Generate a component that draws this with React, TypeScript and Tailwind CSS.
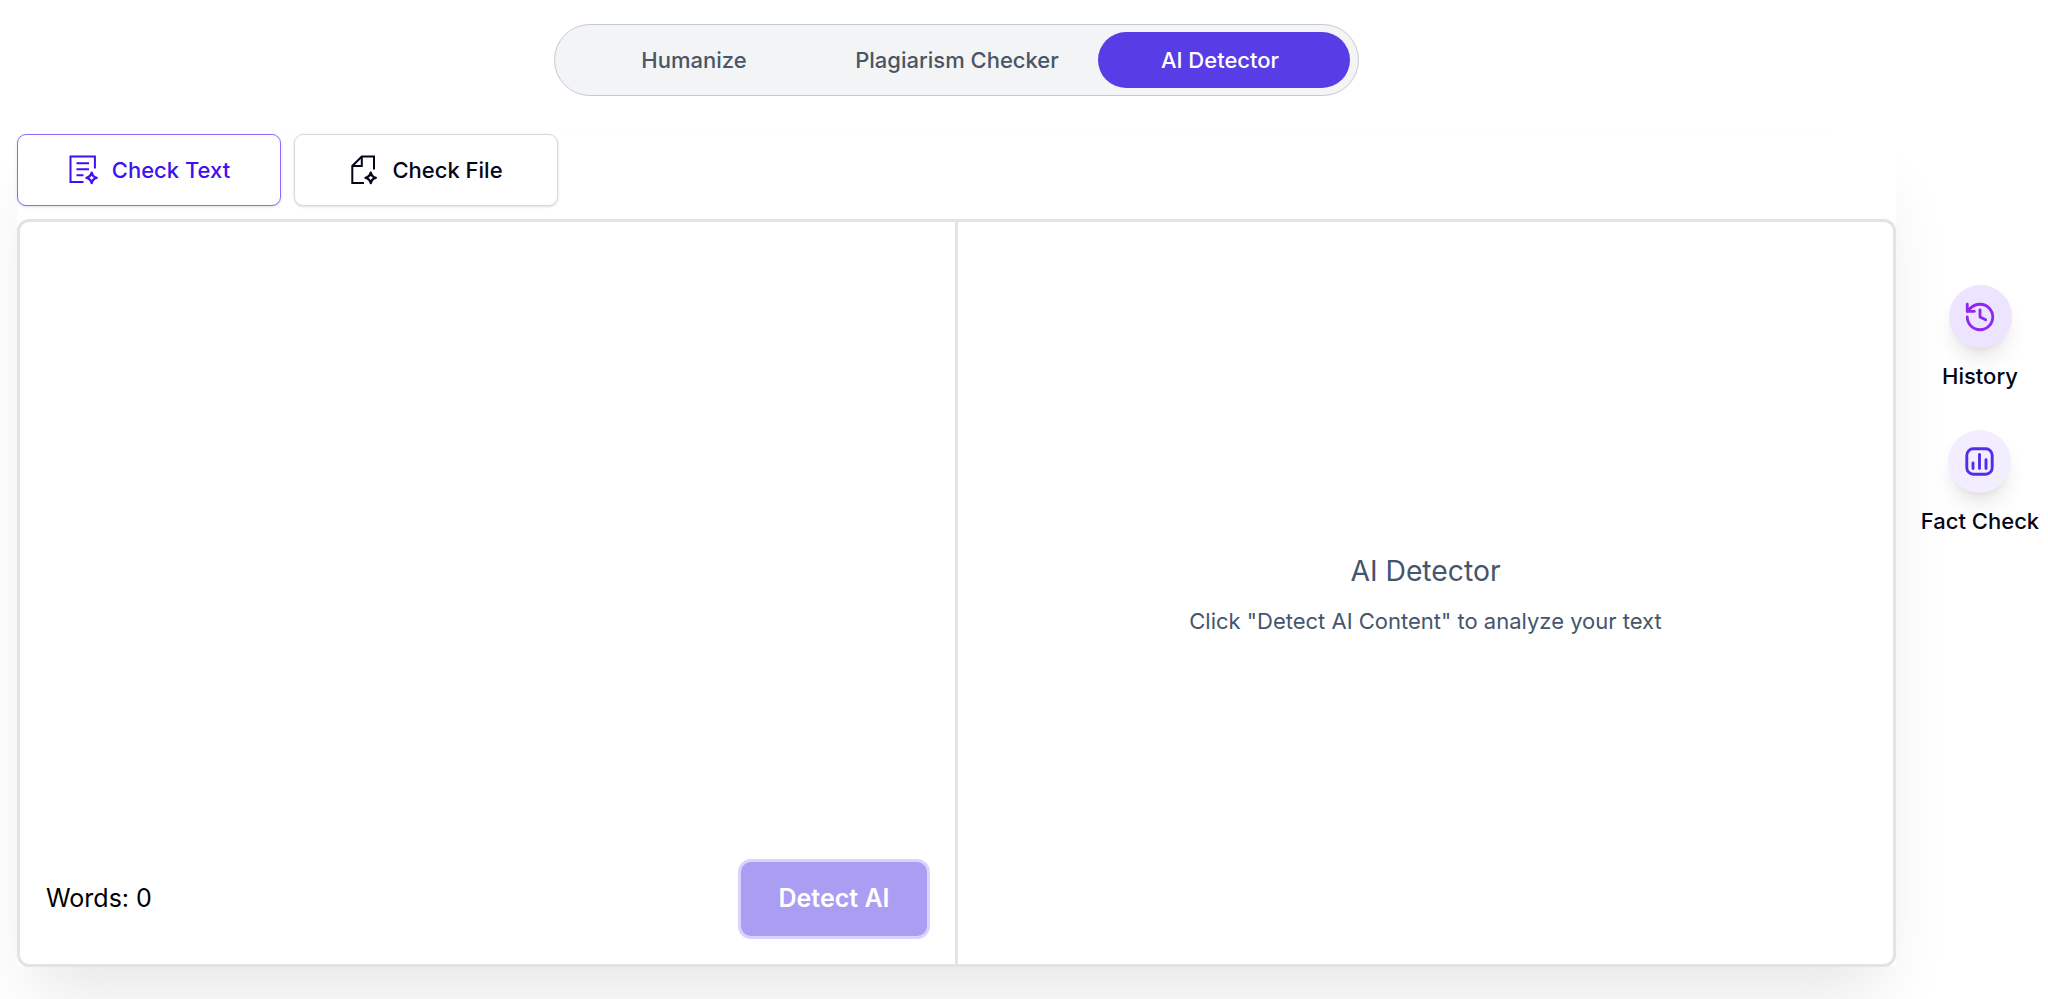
import type { ReactNode } from "react";
import { History } from "lucide-react";

const tabs = [
  { label: "Humanize", active: false, className: "ml-[3px] w-[252px]" },
  { label: "Plagiarism Checker", active: false, className: "ml-[11px] w-[252px]" },
  { label: "AI Detector", active: true, className: "ml-[15px] w-[252px] pr-[8px]" },
];

function CheckTextIcon() {
  return (
    <svg width="30" height="30" viewBox="0 0 30 30" fill="none" stroke="currentColor" strokeWidth="2">
      <path d="M14.5 27H1.5V1.5h24.4V13.5" />
      <path d="M7.5 8.3h12.5M7.5 14.3h12.5M7.5 20.3h7" />
      <path
        d="M22.7 17.6c.6 3.2 1.7 4.3 5 5.2-3.3.8-4.4 1.9-5 5.2-.7-3.3-1.8-4.4-5.2-5.2 3.4-.9 4.5-2 5.2-5.2Z"
        strokeWidth="2.4"
        strokeLinejoin="round"
      />
    </svg>
  );
}

function CheckFileIcon() {
  return (
    <svg width="30" height="30" viewBox="0 0 30 30" fill="none" stroke="currentColor" strokeWidth="2">
      <path d="M15 28H3.3V11L12.8 1.5H25V14.5" />
      <path d="M3.3 11h9.5V1.5" />
      <path
        d="M21.8 17.6c.6 3.2 1.7 4.3 5 5.2-3.3.8-4.4 1.9-5 5.2-.7-3.3-1.8-4.4-5.2-5.2 3.4-.9 4.5-2 5.2-5.2Z"
        strokeWidth="2.4"
        strokeLinejoin="round"
      />
    </svg>
  );
}

function FactCheckIcon() {
  return (
    <svg width="29" height="29" viewBox="0 0 29 29" fill="none" stroke="currentColor" strokeWidth="2.9" strokeLinecap="round">
      <rect x="1.8" y="1.8" width="25.4" height="25.4" rx="6.5" />
      <path d="M8 16v5.5M14.5 7.5v14M21 12.8v8.7" />
    </svg>
  );
}

function SideAction({ label, tone, children }: { label: string; tone: string; children: ReactNode }) {
  return (
    <button className="flex flex-col items-center">
      <span
        className={`flex size-[63px] items-center justify-center rounded-full shadow-[0_14px_21px_-4px_rgba(0,0,0,0.1),0_6px_8px_-6px_rgba(0,0,0,0.1)] ${tone}`}
      >
        {children}
      </span>
      <span className="mt-[11px] text-[22px] leading-[34px] font-medium whitespace-nowrap text-[#020618]">{label}</span>
    </button>
  );
}

export default function App() {
  return (
    <div className="h-[999px] overflow-hidden bg-white font-[Inter,sans-serif]">
      <nav className="mt-6 ml-[554px] flex h-[72px] w-[805px] items-center rounded-full border border-[#c5c9d2] bg-[#f3f4f6] pl-[10px]">
        {tabs.map((tab) => (
          <button
            key={tab.label}
            className={`h-[56px] shrink-0 rounded-full text-[22px] font-medium whitespace-nowrap ${tab.className} ${
              tab.active ? "bg-[#583ce6] text-white" : "text-[#4a5565]"
            }`}
          >
            {tab.label}
          </button>
        ))}
      </nav>

      <div className="mt-[38px] flex items-start">
        <main className="ml-[17px] h-[832px] w-[1879px] shrink-0 shadow-[0_42px_66px_-17px_rgba(0,0,0,0.1)]">
          <div className="flex gap-[13px]">
            <button className="flex h-[72px] w-[264px] items-center justify-center gap-[13px] rounded-[9px] border border-[#8f68ff] bg-white pl-px text-[22px] font-medium text-[#3f10f0] shadow">
              <CheckTextIcon />
              Check Text
            </button>
            <button className="flex h-[72px] w-[264px] items-center justify-center gap-[13px] rounded-[9px] border border-[#d8d8dc] bg-white text-[22px] font-medium text-[#020618] shadow">
              <CheckFileIcon />
              Check File
            </button>
          </div>

          <div className="mt-[13px] flex h-[748px] rounded-xl border-3 border-[#e2e3e6] bg-white">
            <section className="flex w-[938px] flex-col justify-between border-r-3 border-[#e5e5e5]">
              <textarea className="w-full flex-1 resize-none outline-none" aria-label="Text to check" />
              <div className="flex items-center justify-between pr-[25px] pb-[25px] pl-[26px]">
                <span className="text-[25px] text-black">Words: 0</span>
                <button className="h-[80px] w-[192px] rounded-[13px] border-3 border-[#ddd1ff] bg-[#aa9df2] text-[25px] font-semibold text-white">
                  Detect AI
                </button>
              </div>
            </section>
            <section className="flex flex-1 flex-col items-center justify-center pt-[3px] text-[#45556c]">
              <h2 className="text-[28.3px] leading-[39px]">AI Detector</h2>
              <p className="mt-[13px] text-[22px] leading-[34px]">Click "Detect AI Content" to analyze your text</p>
            </section>
          </div>
        </main>

        <aside className="mt-[151px] ml-[18px] flex w-[132px] flex-col items-center gap-[37px]">
          <SideAction label="History" tone="bg-[#ede4ff] text-[#9126ee]">
            <History size={34} strokeWidth={2} />
          </SideAction>
          <SideAction label="Fact Check" tone="bg-[#f3eeff] text-[#4f2fe5]">
            <FactCheckIcon />
          </SideAction>
        </aside>
      </div>
    </div>
  );
}
